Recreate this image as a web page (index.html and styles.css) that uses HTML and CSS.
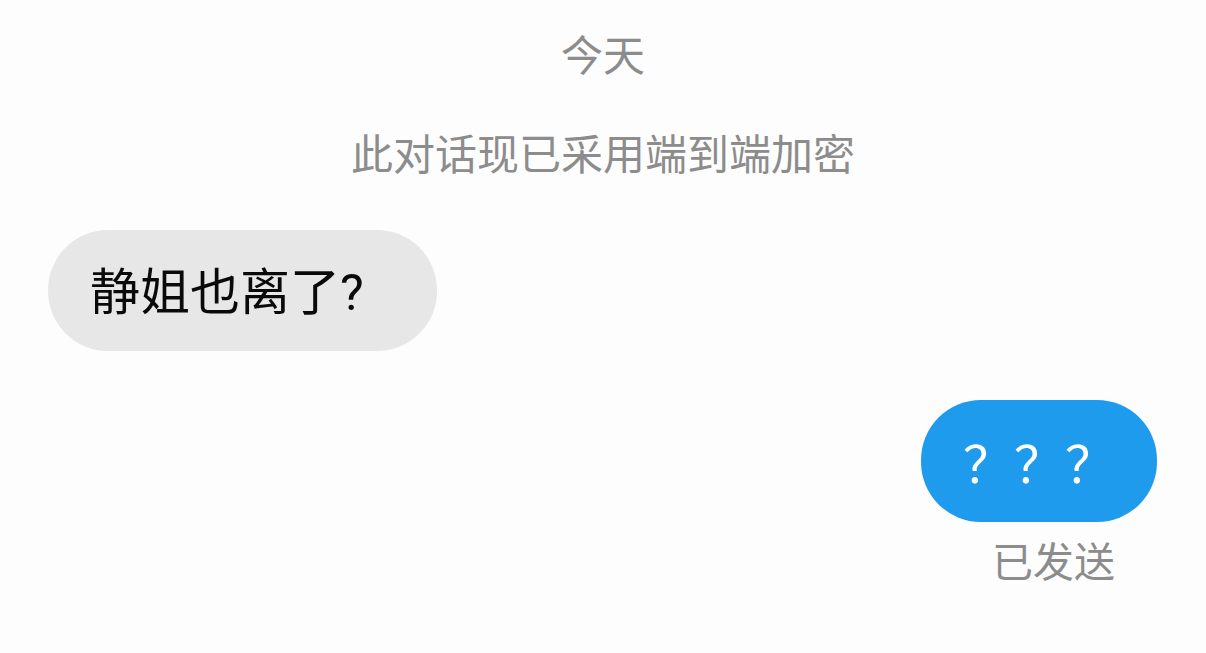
FILE: index.html
```html
<!DOCTYPE html>
<html lang="zh">
<head>
<meta charset="utf-8">
<link rel="stylesheet" href="styles.css">
</head>
<body>
<div class="chat">
  <div class="notice day">今天</div>
  <div class="notice enc">此对话现已采用端到端加密</div>
  <div class="row in">
    <div class="bubble grey">静姐也离了?</div>
  </div>
  <div class="row out">
    <div class="bubble blue">？？？</div>
  </div>
  <div class="status">已发送</div>
</div>
</body>
</html>
```
FILE: styles.css
```css
html, body {
  margin: 0;
  padding: 0;
  background: #fdfdfd;
}
body {
  width: 1206px;
  height: 653px;
  overflow: hidden;
  font-family: "Noto Sans CJK SC", "Noto Sans", sans-serif;
}
.chat {
  display: flex;
  flex-direction: column;
  padding-top: 32px;
}
.notice {
  text-align: center;
  color: #8c8c8c;
  font-size: 42px;
  line-height: 42px;
  height: 42px;
}
.enc {
  margin-top: 57px;
}
.row {
  display: flex;
}
.row.in {
  justify-content: flex-start;
  padding-left: 48px;
  margin-top: 57px;
}
.row.out {
  justify-content: flex-end;
  padding-right: 49px;
  margin-top: 49px;
}
.bubble {
  display: flex;
  align-items: center;
  height: 121px;
  box-sizing: border-box;
  border-radius: 60px;
  line-height: 50px;
  white-space: nowrap;
}
.grey {
  background: #e7e7e7;
  color: #0a0a0a;
  padding: 4px 0 0 42px;
  width: 389px;
  font-family: "Roboto", "Noto Sans CJK SC", sans-serif;
  font-size: 50px;
}
.blue {
  background: #1f9bee;
  color: #fff;
  height: 122px;
  width: 236px;
  padding: 0 0 0 42px;
  font-size: 50px;
  letter-spacing: 1px;
}
.status {
  align-self: flex-end;
  margin-right: 91px;
  margin-top: 16px;
  color: #8c8c8c;
  font-size: 41px;
  line-height: 42px;
}
```
